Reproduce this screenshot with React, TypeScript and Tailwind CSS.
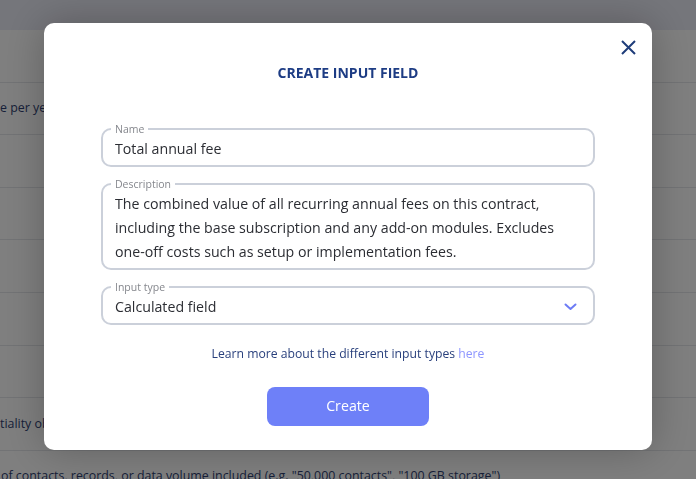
import React from "react";

const rows: { text: string; indent: string }[] = [
  { text: "", indent: "" },
  { text: "e per year, billed in advance for the whole contract term", indent: "pl-0" },
  { text: "", indent: "" },
  { text: "", indent: "" },
  { text: "", indent: "" },
  { text: "", indent: "" },
  { text: "", indent: "" },
  { text: "tiality obligations that survive the end of the agreement", indent: "pl-0" },
  {
    text: 'of contacts, records, or data volume included (e.g. "50,000 contacts", "100 GB storage")',
    indent: "pl-[1px]",
  },
];

const Field: React.FC<{ label: string; children: React.ReactNode }> = ({
  label,
  children,
}) => (
  <fieldset className="rounded-[10px] border-2 border-[#cbd0da] px-[8px] pb-[4px]">
    <legend className="px-[4px] text-[10.5px] leading-[12px] text-[#85878d]">
      {label}
    </legend>
    <div className="px-[4px] pt-[2px] text-[14.2px] leading-[24px] text-[#2b2d33]">
      {children}
    </div>
  </fieldset>
);

export default function App() {
  return (
    <div className="relative h-[479px] w-full overflow-hidden bg-white font-['Open_Sans',sans-serif]">
      {/* page behind the dialog */}
      <div className="h-[30px] bg-[#ebecf6]" />
      {rows.map((row, i) => (
        <div
          key={i}
          className={`flex h-[52.6px] items-center border-b border-[#e4e6ea] text-[12.4px] whitespace-nowrap text-[#2f3f72] ${row.indent}`}
        >
          {row.text}
        </div>
      ))}

      {/* overlay */}
      <div className="fixed inset-0 flex items-center justify-center bg-black/50">
        <div className="relative mt-[-7px] w-[608px] rounded-[10px] bg-white px-[57px] pt-[40px] pb-[24px] shadow-[0_0_40px_rgba(0,0,0,0.25)]">
          <button className="absolute top-[17px] right-[16px] text-[#1f3d7a]">
            <svg width="15" height="15" viewBox="0 0 15 15" fill="none">
              <path
                d="M1 1L14 14M14 1L1 14"
                stroke="currentColor"
                strokeWidth="2"
              />
            </svg>
          </button>

          <h2 className="text-center text-[14px] leading-[20px] font-bold text-[#1d3c84]">
            CREATE INPUT FIELD
          </h2>

          <div className="mt-[40px] flex flex-col gap-[11px]">
            <Field label="Name">Total annual fee</Field>
            <Field label="Description">
              The combined value of all recurring annual fees on this contract,
              <br />
              including the base subscription and any add-on modules. Excludes
              <br />
              one-off costs such as setup or implementation fees.
            </Field>
            <Field label="Input type">
              <div className="flex items-center justify-between pr-[4px]">
                <span>Calculated field</span>
                <svg width="13" height="8" viewBox="0 0 13 8" fill="none">
                  <path
                    d="M1.5 1.5L6.5 6L11.5 1.5"
                    stroke="#6d7cf5"
                    strokeWidth="2"
                    strokeLinecap="round"
                    strokeLinejoin="round"
                  />
                </svg>
              </div>
            </Field>
          </div>

          <p className="mt-[19px] text-center text-[12.2px] leading-[20px] text-[#283f7c]">
            Learn more about the different input types{" "}
            <a className="text-[#8d95ff]">here</a>
          </p>

          <button className="mx-auto mt-[23px] flex h-[39px] w-[162px] items-center justify-center rounded-[8px] bg-[#6e80f8] text-[14.2px] text-white">
            Create
          </button>
        </div>
      </div>
    </div>
  );
}
